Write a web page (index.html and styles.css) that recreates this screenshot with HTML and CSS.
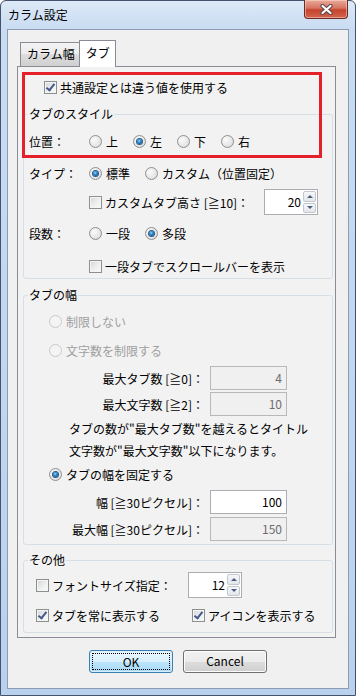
FILE: index.html
```html
<!DOCTYPE html>
<html lang="ja">
<head>
    <meta charset="UTF-8">
    <meta name="viewport" content="width=device-width, initial-scale=1.0">
    <title>カラム設定</title>

    <link rel="stylesheet" href="styles.css">
</head>
<body>
    <div class="window">
        <div class="titlebar">
            <span class="title">カラム設定</span>
            <button class="close" type="button" aria-label="閉じる">
                <svg width="13" height="11" viewBox="0 0 13 11">
                    <path d="M2.5 2 L10.5 9 M10.5 2 L2.5 9" stroke="#5a4646" stroke-width="4.2" stroke-linecap="round"/>
                    <path d="M2.5 2 L10.5 9 M10.5 2 L2.5 9" stroke="#ffffff" stroke-width="2.2" stroke-linecap="round"/>
                </svg>
            </button>
        </div>

        <div class="client">
            <div class="tabs">
                <div class="tab">カラム幅</div>
                <div class="tab active">タブ</div>
            </div>

            <div class="panel">
                <div class="row top-row">
                    <label class="check"><span class="box checked"></span>共通設定とは違う値を使用する</label>
                </div>

                <!-- タブのスタイル -->
                <fieldset class="group style-group">
                    <legend>タブのスタイル</legend>
                    <div class="row gap9 inset5">
                        <span class="row-label">位置：</span>
                        <label class="opt pos"><span class="radio"></span>上</label>
                        <label class="opt pos"><span class="radio on"></span>左</label>
                        <label class="opt pos"><span class="radio"></span>下</label>
                        <label class="opt pos"><span class="radio"></span>右</label>
                    </div>
                    <div class="row gap12 inset5">
                        <span class="row-label">タイプ：</span>
                        <label class="opt kind"><span class="radio on"></span>標準</label>
                        <label class="opt"><span class="radio"></span>カスタム（位置固定）</label>
                    </div>
                    <div class="row spin-row gap6 inset65">
                        <label class="check"><span class="box"></span>カスタムタブ高さ [≧10]：</label>
                        <div class="spin push">
                            <span class="spin-value">20</span>
                            <span class="spin-btns"><span class="spin-btn up"></span><span class="spin-btn down"></span></span>
                        </div>
                    </div>
                    <div class="row gap8 inset5">
                        <span class="row-label">段数：</span>
                        <label class="opt kind"><span class="radio"></span>一段</label>
                        <label class="opt"><span class="radio on"></span>多段</label>
                    </div>
                    <div class="row gap13 inset65">
                        <label class="check"><span class="box"></span>一段タブでスクロールバーを表示</label>
                    </div>
                </fieldset>

                <!-- タブの幅 -->
                <fieldset class="group width-group">
                    <legend>タブの幅</legend>
                    <div class="row gap8 inset25">
                        <label class="opt disabled"><span class="radio"></span>制限しない</label>
                    </div>
                    <div class="row gap9 inset25">
                        <label class="opt disabled"><span class="radio"></span>文字数を制限する</label>
                    </div>
                    <div class="row tall gap6 inset25">
                        <span class="field-label">最大タブ数 [≧0]：</span>
                        <span class="field disabled">4</span>
                    </div>
                    <div class="row tall gap2 inset25">
                        <span class="field-label">最大文字数 [≧2]：</span>
                        <span class="field disabled">10</span>
                    </div>
                    <p class="note">タブの数が"最大タブ数"を越えるとタイトル<br>文字数が"最大文字数"以下になります。</p>
                    <div class="row gap2 inset25">
                        <label class="opt"><span class="radio on"></span>タブの幅を固定する</label>
                    </div>
                    <div class="row tall gap6 inset25">
                        <span class="field-label">幅 [≧30ピクセル]：</span>
                        <span class="field">100</span>
                    </div>
                    <div class="row tall gap3 inset25">
                        <span class="field-label">最大幅 [≧30ピクセル]：</span>
                        <span class="field disabled">150</span>
                    </div>
                </fieldset>

                <!-- その他 -->
                <fieldset class="group other-group">
                    <legend>その他</legend>
                    <div class="row spin-row gap4 inset12">
                        <label class="check font-size"><span class="box"></span>フォントサイズ指定：</label>
                        <div class="spin">
                            <span class="spin-value">12</span>
                            <span class="spin-btns"><span class="spin-btn up"></span><span class="spin-btn down"></span></span>
                        </div>
                    </div>
                    <div class="row gap7 inset12">
                        <label class="check always"><span class="box checked"></span>タブを常に表示する</label>
                        <label class="check"><span class="box checked"></span>アイコンを表示する</label>
                    </div>
                </fieldset>

                <div class="highlight"></div>
            </div>

            <div class="buttons">
                <button class="btn default" type="button"><span>OK</span></button>
                <button class="btn" type="button"><span>Cancel</span></button>
            </div>
        </div>
    </div>
</body>
</html>
```

FILE: styles.css
```css
/* General styling */
body, html {
    margin: 0;
    padding: 0;
}

body {
    width: 356px;
    height: 696px;
    overflow: hidden;
    font-family: "Noto Sans CJK JP", sans-serif;
    font-size: 12px;
    color: #000;
    background: #fff;
}

/* Window frame */
.window {
    box-sizing: border-box;
    width: 356px;
    height: 696px;
    border: 1px solid #44536b;
    border-radius: 6px 6px 0 0;
    padding: 0 6px 6px;
    background: linear-gradient(#dde9f7, #c9dcf2 28px, #bad1ed);
    display: flex;
    flex-direction: column;
}

.titlebar {
    height: 28px;
    flex: none;
    display: flex;
    justify-content: space-between;
    align-items: flex-start;
    padding-left: 1px;
}

.title {
    line-height: 16px;
    padding-top: 6px;
}

.close {
    width: 44px;
    height: 19px;
    margin: -1px 1px 0 0;
    padding: 0;
    border: 1px solid #6b2b22;
    border-top: none;
    border-radius: 0 0 4px 4px;
    background: linear-gradient(#e9ab9b, #d77463 45%, #c4432c 55%, #d4654d);
    box-shadow: inset 0 0 0 1px rgba(255, 220, 210, 0.5);
    display: flex;
    justify-content: center;
    align-items: center;
}

.client {
    flex: 1;
    border: 1px solid #8b9cb3;
    background: #f0f0f0;
    display: flex;
    flex-direction: column;
}

/* Tab strip */
.tabs {
    height: 26px;
    margin: 10px 0 0 9px;
    padding-left: 3px;
    display: flex;
    align-items: flex-end;
}

.tab {
    box-sizing: border-box;
    height: 24px;
    padding: 0 6px;
    line-height: 22px;
    border: 1px solid #898c95;
    border-bottom: none;
    background: linear-gradient(#f3f3f3, #ebebeb 50%, #dddddd 50%, #cfcfcf);
}

.tab.active {
    position: relative;
    z-index: 1;
    height: 27px;
    margin: 0 0 -1px -3px;
    padding: 0 5px 0 6px;
    line-height: 24px;
    background: #fff;
}

/* Tab page */
.panel {
    position: relative;
    margin: 0 12px 0 9px;
    border: 1px solid #898c95;
    background: #f2f2f2;
    padding: 10px 2px 4px 5px;
}

.highlight {
    position: absolute;
    left: 4px;
    top: 5px;
    width: 300px;
    height: 86px;
    box-sizing: border-box;
    border: 3px solid #e4202b;
}

/* Group boxes */
.group {
    margin: 9px 0 0;
    padding: 0 0 2px;
    min-width: 0;
    border: 1px solid #d5dfe5;
    border-radius: 3px;
}

.group legend {
    margin-left: 4px;
    padding: 0 1px;
    line-height: 16px;
}

.width-group {
    margin-top: 8px;
    padding-bottom: 3px;
}

.other-group {
    margin-top: 7px;
    padding-bottom: 7px;
}

/* Rows */
.row {
    height: 20px;
    display: flex;
    align-items: center;
}

.row.tall {
    height: 24px;
}

.row.spin-row {
    height: 26px;
}

.top-row {
    padding-left: 21px;
}

.gap2 { margin-top: 2px; }
.gap3 { margin-top: 3px; }
.gap4 { margin-top: 4px; }
.gap6 { margin-top: 6px; }
.gap7 { margin-top: 7px; }
.gap8 { margin-top: 8px; }
.gap9 { margin-top: 9px; }
.gap12 { margin-top: 12px; }
.gap13 { margin-top: 13px; }

.inset5 { padding-left: 5px; }
.inset12 { padding-left: 12px; }
.inset25 { padding-left: 25px; }
.inset65 { padding-left: 65px; }

.row-label {
    width: 60px;
    flex: none;
}

.check, .opt {
    display: flex;
    align-items: center;
    white-space: nowrap;
}

.opt.pos { width: 44px; }
.opt.kind { width: 56px; }
.check.font-size { width: 152px; }
.check.always { width: 156px; }

.opt.disabled {
    color: #a0a0a0;
}

/* Check boxes */
.box {
    position: relative;
    box-sizing: border-box;
    width: 13px;
    height: 13px;
    flex: none;
    margin-right: 3px;
    border: 1px solid #8e8f8f;
    background: linear-gradient(135deg, #d4d6d8, #eff0f1 60%, #fbfbfb);
    box-shadow: inset 0 0 0 1px #f5f5f5;
}

.box.checked::after {
    content: "";
    position: absolute;
    left: 3px;
    top: 0;
    width: 3px;
    height: 7px;
    border: solid #46598c;
    border-width: 0 2px 2px 0;
    transform: rotate(38deg);
}

/* Radio buttons */
.radio {
    position: relative;
    box-sizing: border-box;
    width: 13px;
    height: 13px;
    flex: none;
    margin-right: 4px;
    border: 1px solid #8f8f8f;
    border-radius: 50%;
    background: radial-gradient(circle at 35% 35%, #fbfbfb, #e6e6e6 60%, #d0d0d0);
}

.radio.on::after {
    content: "";
    position: absolute;
    left: 3px;
    top: 3px;
    width: 5px;
    height: 5px;
    border-radius: 50%;
    background: radial-gradient(circle at 45% 40%, #9ddcfb 0, #2a8ad2 1.6px, #0c4a8e 3px);
    box-shadow: 0 0 0 1px #2b5c8a;
}

.opt.disabled .radio {
    border-color: #c9c9c9;
    background: #f4f4f4;
}

/* Text boxes */
.field-label {
    width: 155px;
    margin-right: 6px;
    text-align: right;
    white-space: nowrap;
}

.field {
    box-sizing: border-box;
    width: 77px;
    height: 24px;
    padding-right: 4px;
    line-height: 22px;
    text-align: right;
    border: 1px solid #abadb3;
    background: #fff;
}

.field.disabled {
    border-color: #b8b8b8;
    background: #f0f0f0;
    color: #6d6d6d;
}

.note {
    margin: 2px 0 0;
    padding-left: 45px;
    line-height: 22px;
}

/* Spin boxes */
.spin {
    box-sizing: border-box;
    width: 54px;
    height: 26px;
    padding: 1px;
    border: 1px solid #abadb3;
    background: #fff;
    display: flex;
}

.spin.push {
    margin: 0 14px 0 auto;
}

.spin-value {
    flex: 1;
    padding-right: 2px;
    line-height: 22px;
    text-align: right;
}

.spin-btns {
    width: 13px;
    display: flex;
    flex-direction: column;
    gap: 1px;
}

.spin-btn {
    flex: 1;
    border: 1px solid #c3c7ce;
    border-radius: 2px;
    background: linear-gradient(#f6f7f9, #e3e6ea);
    display: flex;
    justify-content: center;
    align-items: center;
}

.spin-btn::after {
    content: "";
    border-left: 3px solid transparent;
    border-right: 3px solid transparent;
}

.spin-btn.up::after {
    border-bottom: 3px solid #4c5d82;
}

.spin-btn.down::after {
    border-top: 3px solid #4c5d82;
}

/* Dialog buttons */
.buttons {
    margin-top: 12px;
    display: flex;
    justify-content: center;
    gap: 10px;
}

.btn {
    box-sizing: border-box;
    width: 84px;
    height: 23px;
    padding: 2px;
    border: 1px solid #707070;
    border-radius: 3px;
    font-family: "Noto Sans CJK JP", sans-serif;
    font-size: 12px;
    color: #000;
    background: linear-gradient(#f2f2f2, #ebebeb 50%, #dddddd 50%, #cfcfcf);
    box-shadow: inset 0 0 0 1px #fcfcfc;
}

.btn span {
    display: block;
    height: 100%;
    box-sizing: border-box;
    line-height: 15px;
}

.btn.default {
    border-color: #3c7fb1;
    background: linear-gradient(#eaf6fd, #d9f0fc 50%, #bee6fd 50%, #a7d9f5);
    box-shadow: inset 0 0 0 1px #d8eefb;
}

.btn.default span {
    border: 1px dotted #000;
}
```
